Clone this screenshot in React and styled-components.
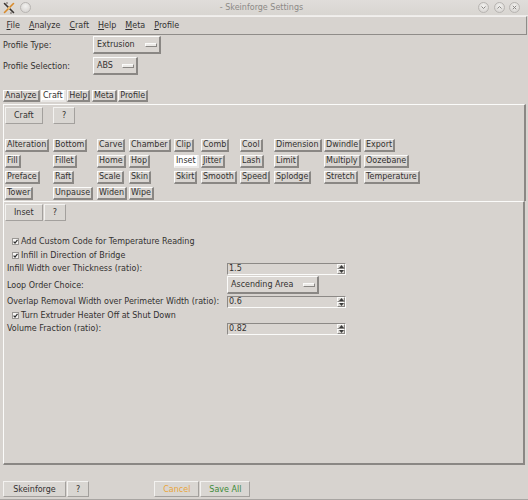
import React from 'react';
import styled, { createGlobalStyle } from 'styled-components';

const BG = '#d7d3cf';
const LIGHT = '#fbfbfa';
const DARK = '#8a8784';
const TEXT = '#333130';

const GlobalStyle = createGlobalStyle`
  html, body { margin: 0; padding: 0; background: ${BG}; }
  body { font-family: "DejaVu Sans", "Noto Sans", sans-serif; font-size: 8px; color: ${TEXT}; }
  * { box-sizing: border-box; }
`;

const Window = styled.div`
  width: 528px;
  height: 500px;
  display: flex;
  flex-direction: column;
  overflow: hidden;
  background: ${BG};
`;

/* ---------- title bar ---------- */
const TitleBar = styled.div`
  height: 16px;
  display: grid;
  grid-template-columns: 1fr auto 1fr;
  align-items: center;
  padding: 0 8px 0 3px;
  background: linear-gradient(#e0ddda, #d8d5d1);
  border-bottom: 1px solid #eeecea;
`;

const TitleLeft = styled.div`
  display: flex;
  align-items: center;
  gap: 5px;
  justify-self: start;
`;

const TitleText = styled.div`
  color: #8c8986;
  font-size: 8px;
  white-space: nowrap;
`;

const TitleRight = styled.div`
  display: flex;
  align-items: center;
  gap: 4.5px;
  justify-self: end;
`;

const RoundBtn = styled.span`
  width: 11px;
  height: 11px;
  border-radius: 50%;
  border: 1px solid #b8b5b2;
  background: radial-gradient(circle at 50% 35%, #f2f1ef, #d2cfcc);
  display: flex;
  align-items: center;
  justify-content: center;
`;

/* ---------- menu bar ---------- */
const MenuBar = styled.div`
  height: 19px;
  display: flex;
  align-items: center;
  padding-left: 2px;
  margin-right: 1px;
  border-top: 1px solid #f1efed;
  border-bottom: 1px solid #8f8c89;
  border-right: 1px solid #8f8c89;
`;

const MenuItem = styled.span`
  padding: 0 4.5px;
  color: ${TEXT};
  font-size: 8px;
`;

const Mn = styled.span`
  text-decoration: underline;
  text-underline-offset: 1px;
`;

/* ---------- profile rows ---------- */
const ProfileGrid = styled.div`
  display: grid;
  grid-template-columns: 90px auto;
  row-gap: 3px;
  align-items: center;
  justify-items: start;
  padding-left: 3px;
  margin-top: 1px;
`;

const Label = styled.span`
  font-size: 8px;
  color: ${TEXT};
  white-space: nowrap;
`;

const OptionMenu = styled.div`
  height: ${p => p.$h || 18}px;
  display: inline-flex;
  align-items: center;
  gap: ${p => p.$gap || 10}px;
  padding: 0 2px 0 3px;
  background: #dad6d2;
  border-style: solid;
  border-width: 1px 2px 2px 1px;
  border-color: ${LIGHT} ${DARK} ${DARK} ${LIGHT};
  font-size: 8px;
  color: ${TEXT};
  white-space: nowrap;
`;

const Indicator = styled.span`
  width: 12px;
  height: 4px;
  background: #ebe9e6;
  border-style: solid;
  border-width: 1px;
  border-color: ${LIGHT} ${DARK} ${DARK} ${LIGHT};
`;

/* ---------- tabs ---------- */
const TabRow = styled.div`
  display: flex;
  gap: 1.5px;
  padding-left: 3px;
  margin-top: 15px;
`;

/* tk raised button */
const TkBtn = styled.span`
  display: inline-flex;
  align-items: center;
  height: ${p => p.$h || 13}px;
  padding: 0 1px 0 1px;
  font-size: 8px;
  line-height: 8px;
  color: ${TEXT};
  white-space: nowrap;
  background: ${p => (p.$active ? '#ffffff' : '#d9d5d1')};
  border-style: solid;
  border-width: 1px 2px 2px 1px;
  border-color: ${p =>
    p.$active ? '#ffffff #e9e7e5 #e9e7e5 #ffffff' : `${LIGHT} ${DARK} ${DARK} ${LIGHT}`};
`;

/* ---------- frames ---------- */
const FrameA = styled.div`
  margin: 2px 2px 0 3px;
  border-top: 1px solid ${LIGHT};
  border-left: 1px solid ${LIGHT};
  border-right: 2px solid ${DARK};
  padding: 2px 0 1px 1px;
`;

const CraftGrid = styled.div`
  display: grid;
  grid-template-columns: 48px 44px 32px 45px 27px 39px 34px 50px 40px auto;
  row-gap: 3px;
  align-items: center;
  justify-items: start;
`;

const Spacer = styled.div`
  grid-column: 1 / -1;
  height: 9px;
`;

const PanelBtn = styled.span`
  display: inline-flex;
  align-items: center;
  justify-content: center;
  height: ${p => p.$h || 17}px;
  min-width: ${p => p.$w || 0}px;
  padding: 0 8px;
  font-size: 8px;
  color: ${p => p.$color || TEXT};
  white-space: nowrap;
  background: #d9d6d2;
  border-style: solid;
  border-width: 1px;
  border-color: #f3f2f0 #a3a09d #a3a09d #f3f2f0;
`;

const FrameB = styled.div`
  flex: 1;
  margin: 0 3px 0 3px;
  border-top: 1px solid ${LIGHT};
  border-left: 1px solid ${LIGHT};
  border-right: 2px solid ${DARK};
  border-bottom: 2px solid ${DARK};
  padding: 2px 0 0 1px;
  display: flex;
  flex-direction: column;
`;

const ButtonPair = styled.div`
  display: flex;
  gap: 1px;
`;

const Settings = styled.div`
  margin-top: 13px;
  padding-left: 2px;
  display: flex;
  flex-direction: column;
`;

const SettingRow = styled.div`
  height: ${p => p.$h}px;
  display: grid;
  grid-template-columns: 220px auto;
  align-items: center;
  justify-items: start;
`;

const CheckRow = styled.div`
  height: ${p => p.$h}px;
  display: flex;
  align-items: center;
  gap: 2px;
  padding-left: 5px;
  font-size: 8px;
  color: ${TEXT};
`;

const CheckBox = styled.span`
  width: 7px;
  height: 7px;
  background: #f7f6f5;
  border: 1px solid #9a9794;
  display: flex;
  align-items: center;
  justify-content: center;
`;

const Spin = styled.div`
  width: 119px;
  height: 12px;
  display: flex;
  align-items: stretch;
  background: #d9d5d1;
  border-style: solid;
  border-width: 1px;
  border-color: #8c8986 ${LIGHT} ${LIGHT} #8c8986;
`;

const SpinText = styled.span`
  flex: 1;
  padding-left: 1px;
  font-size: 8px;
  line-height: 10px;
  color: ${TEXT};
`;

const SpinArrows = styled.span`
  width: 8px;
  display: flex;
  flex-direction: column;
`;

const Arrow = styled.span`
  flex: 1;
  display: flex;
  align-items: center;
  justify-content: center;
  background: #dcd9d5;
  border-style: solid;
  border-width: 0.5px;
  border-color: ${LIGHT} ${DARK} ${DARK} ${LIGHT};
`;

/* ---------- bottom bar ---------- */
const BottomBar = styled.div`
  height: 35px;
  display: flex;
  align-items: flex-start;
  padding: 16px 0 0 3px;
  border-bottom: 1px solid #a8a5a2;
`;

const ActionGroup = styled.div`
  display: flex;
  gap: 1px;
  margin-left: 65px;
`;

/* ---------- icons ---------- */
const AppIcon = () => (
  <svg width="12" height="12" viewBox="0 0 12 12">
    <path d="M1.5 1.5 L10.5 10.5" stroke="#3a3532" strokeWidth="1.6" strokeLinecap="round" />
    <path d="M10.5 1.5 L1.5 10.5" stroke="#d98b2b" strokeWidth="1.6" strokeLinecap="round" />
    <path d="M3 1 L5 1 M7 11 L9 11" stroke="#6e6560" strokeWidth="1" />
    <circle cx="6" cy="6" r="1.2" fill="#f0c070" />
  </svg>
);

const Glyph = ({ kind }) => (
  <svg width="7" height="7" viewBox="0 0 7 7">
    {kind === 'down' && <path d="M1.5 2.5 L3.5 4.5 L5.5 2.5" fill="none" stroke="#8a8784" strokeWidth="1" />}
    {kind === 'up' && <path d="M1.5 4.5 L3.5 2.5 L5.5 4.5" fill="none" stroke="#8a8784" strokeWidth="1" />}
    {kind === 'close' && <path d="M1.8 1.8 L5.2 5.2 M5.2 1.8 L1.8 5.2" fill="none" stroke="#8a8784" strokeWidth="1" />}
  </svg>
);

const Check = () => (
  <svg width="5" height="5" viewBox="0 0 5 5">
    <path d="M0.6 2.6 L2 4 L4.5 0.8" fill="none" stroke="#2b2b2b" strokeWidth="1.2" />
  </svg>
);

const Tri = ({ up }) => (
  <svg width="5" height="3" viewBox="0 0 5 3">
    <path d={up ? 'M0 3 L2.5 0 L5 3 Z' : 'M0 0 L2.5 3 L5 0 Z'} fill="#3a3a3a" />
  </svg>
);

/* ---------- data ---------- */
const menus = [
  ['F', 'ile'],
  ['A', 'nalyze'],
  ['C', 'raft'],
  ['H', 'elp'],
  ['M', 'eta'],
  ['P', 'rofile'],
];

const tabs = ['Analyze', 'Craft', 'Help', 'Meta', 'Profile'];

const craftRows = [
  ['Alteration', 'Bottom', 'Carve', 'Chamber', 'Clip', 'Comb', 'Cool', 'Dimension', 'Dwindle', 'Export'],
  ['Fill', 'Fillet', 'Home', 'Hop', 'Inset', 'Jitter', 'Lash', 'Limit', 'Multiply', 'Oozebane'],
  ['Preface', 'Raft', 'Scale', 'Skin', 'Skirt', 'Smooth', 'Speed', 'Splodge', 'Stretch', 'Temperature'],
  ['Tower', 'Unpause', 'Widen', 'Wipe'],
];

const settings = [
  { kind: 'check', label: 'Add Custom Code for Temperature Reading', h: 14 },
  { kind: 'check', label: 'Infill in Direction of Bridge', h: 14 },
  { kind: 'spin', label: 'Infill Width over Thickness (ratio):', value: '1.5', h: 13 },
  { kind: 'choice', label: 'Loop Order Choice:', value: 'Ascending Area', h: 20 },
  { kind: 'spin', label: 'Overlap Removal Width over Perimeter Width (ratio):', value: '0.6', h: 13 },
  { kind: 'check', label: 'Turn Extruder Heater Off at Shut Down', h: 14 },
  { kind: 'spin', label: 'Volume Fraction (ratio):', value: '0.82', h: 13 },
];

function SpinBox({ value }) {
  return (
    <Spin>
      <SpinText>{value}</SpinText>
      <SpinArrows>
        <Arrow><Tri up /></Arrow>
        <Arrow><Tri /></Arrow>
      </SpinArrows>
    </Spin>
  );
}

export default function App() {
  return (
    <Window>
      <GlobalStyle />
      <TitleBar>
        <TitleLeft>
          <AppIcon />
          <RoundBtn />
        </TitleLeft>
        <TitleText>- Skeinforge Settings</TitleText>
        <TitleRight>
          <RoundBtn><Glyph kind="down" /></RoundBtn>
          <RoundBtn><Glyph kind="up" /></RoundBtn>
          <RoundBtn><Glyph kind="close" /></RoundBtn>
        </TitleRight>
      </TitleBar>

      <MenuBar>
        {menus.map(([m, rest]) => (
          <MenuItem key={m + rest}>
            <Mn>{m}</Mn>
            {rest}
          </MenuItem>
        ))}
      </MenuBar>

      <ProfileGrid>
        <Label>Profile Type:</Label>
        <OptionMenu>
          Extrusion <Indicator />
        </OptionMenu>
        <Label>Profile Selection:</Label>
        <OptionMenu $gap={9}>
          ABS <Indicator />
        </OptionMenu>
      </ProfileGrid>

      <TabRow>
        {tabs.map(t => (
          <TkBtn key={t} $h={12} $active={t === 'Craft'}>
            {t}
          </TkBtn>
        ))}
      </TabRow>

      <FrameA>
        <CraftGrid>
          <PanelBtn>Craft</PanelBtn>
          <PanelBtn>?</PanelBtn>
          <Spacer />
          {craftRows.map(row =>
            row.map(name => (
              <TkBtn key={name} $active={name === 'Inset'}>
                {name}
              </TkBtn>
            ))
          )}
        </CraftGrid>
      </FrameA>

      <FrameB>
        <ButtonPair>
          <PanelBtn>Inset</PanelBtn>
          <PanelBtn>?</PanelBtn>
        </ButtonPair>
        <Settings>
          {settings.map(s =>
            s.kind === 'check' ? (
              <CheckRow key={s.label} $h={s.h}>
                <CheckBox><Check /></CheckBox>
                {s.label}
              </CheckRow>
            ) : (
              <SettingRow key={s.label} $h={s.h}>
                <Label>{s.label}</Label>
                {s.kind === 'spin' ? (
                  <SpinBox value={s.value} />
                ) : (
                  <OptionMenu $gap={10}>
                    {s.value} <Indicator />
                  </OptionMenu>
                )}
              </SettingRow>
            )
          )}
        </Settings>
      </FrameB>

      <BottomBar>
        <ButtonPair>
          <PanelBtn $h={16} $w={63}>Skeinforge</PanelBtn>
          <PanelBtn $h={16}>?</PanelBtn>
        </ButtonPair>
        <ActionGroup>
          <PanelBtn $h={16} $color="#e9a53a">Cancel</PanelBtn>
          <PanelBtn $h={16} $color="#3d8b37">Save All</PanelBtn>
        </ActionGroup>
      </BottomBar>
    </Window>
  );
}
